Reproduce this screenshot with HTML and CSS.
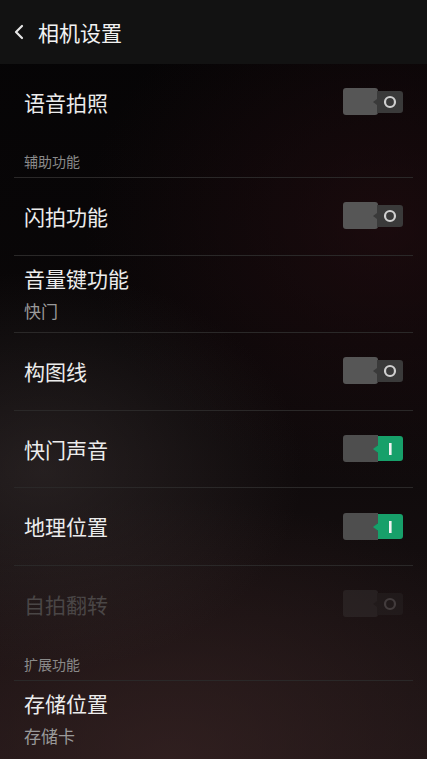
FILE: index.html
```html
<!DOCTYPE html>
<html lang="zh-CN">
<head>
  <meta charset="UTF-8" />
  <title>相机设置</title>
  <link rel="stylesheet" href="styles.css">
</head>
<body>

<header class="topbar">
  <svg class="back" width="12" height="16" viewBox="0 0 12 16">
    <path d="M9 2 L3 8 L9 14" fill="none" stroke="#e6e6e6" stroke-width="2.2" stroke-linecap="round" stroke-linejoin="round"/>
  </svg>
  <h1>相机设置</h1>
</header>

<main class="list">
  <div class="row">
    <span class="label">语音拍照</span>
    <svg class="toggle" width="60" height="28" viewBox="0 0 60 28">
      <rect x="0" y="0" width="35" height="27" rx="3" fill="#565656"/>
      <path d="M34 3 H57 Q60 3 60 6 V22 Q60 25 57 25 H34 V17 L30 14 L34 11 Z" fill="#3a3a3a"/>
      <circle cx="47" cy="14" r="5" fill="none" stroke="#d0d0d0" stroke-width="2.2"/>
    </svg>
  </div>

  <div class="section">辅助功能</div>

  <div class="row line">
    <span class="label">闪拍功能</span>
    <svg class="toggle" width="60" height="28" viewBox="0 0 60 28">
      <rect x="0" y="0" width="35" height="27" rx="3" fill="#565656"/>
      <path d="M34 3 H57 Q60 3 60 6 V22 Q60 25 57 25 H34 V17 L30 14 L34 11 Z" fill="#3a3a3a"/>
      <circle cx="47" cy="14" r="5" fill="none" stroke="#d0d0d0" stroke-width="2.2"/>
    </svg>
  </div>

  <div class="row line">
    <div class="stack">
      <span class="label">音量键功能</span>
      <span class="sub">快门</span>
    </div>
  </div>

  <div class="row line">
    <span class="label">构图线</span>
    <svg class="toggle" width="60" height="28" viewBox="0 0 60 28">
      <rect x="0" y="0" width="35" height="27" rx="3" fill="#565656"/>
      <path d="M34 3 H57 Q60 3 60 6 V22 Q60 25 57 25 H34 V17 L30 14 L34 11 Z" fill="#3a3a3a"/>
      <circle cx="47" cy="14" r="5" fill="none" stroke="#d0d0d0" stroke-width="2.2"/>
    </svg>
  </div>

  <div class="row line">
    <span class="label">快门声音</span>
    <svg class="toggle" width="60" height="28" viewBox="0 0 60 28">
      <path d="M3 0 H35 V10 L31 14 L35 18 V27 H3 Q0 27 0 24 V3 Q0 0 3 0 Z" fill="#4e4e4e"/>
      <path d="M35 1 H57 Q60 1 60 4 V23 Q60 26 57 26 H35 V18 L30 14 L35 10 Z" fill="#17a06a"/>
      <rect x="46" y="8" width="2.6" height="12" fill="#f2f2f2"/>
    </svg>
  </div>

  <div class="row line">
    <span class="label">地理位置</span>
    <svg class="toggle" width="60" height="28" viewBox="0 0 60 28">
      <path d="M3 0 H35 V10 L31 14 L35 18 V27 H3 Q0 27 0 24 V3 Q0 0 3 0 Z" fill="#4e4e4e"/>
      <path d="M35 1 H57 Q60 1 60 4 V23 Q60 26 57 26 H35 V18 L30 14 L35 10 Z" fill="#17a06a"/>
      <rect x="46" y="8" width="2.6" height="12" fill="#f2f2f2"/>
    </svg>
  </div>

  <div class="row disabled">
    <span class="label">自拍翻转</span>
    <svg class="toggle" width="60" height="28" viewBox="0 0 60 28">
      <rect x="0" y="0" width="35" height="27" rx="3" fill="#565656"/>
      <path d="M34 3 H57 Q60 3 60 6 V22 Q60 25 57 25 H34 V17 L30 14 L34 11 Z" fill="#3a3a3a"/>
      <circle cx="47" cy="14" r="5" fill="none" stroke="#d0d0d0" stroke-width="2.2"/>
    </svg>
  </div>

  <div class="section">扩展功能</div>

  <div class="row">
    <div class="stack">
      <span class="label">存储位置</span>
      <span class="sub">存储卡</span>
    </div>
  </div>
</main>

</body>
</html>
```

FILE: styles.css
```css
html, body {
  height: 100%;
}
body {
  margin: 0;
  width: 427px;
  height: 759px;
  overflow: hidden;
  font-family: "Noto Sans CJK SC", "Noto Sans", sans-serif;
  color: #ececec;
  background-color: #070506;
  background-image:
    radial-gradient(ellipse 260px 200px at 10% 62%, rgba(70, 62, 62, 0.4), transparent),
    radial-gradient(ellipse 420px 260px at 40% 100%, rgba(56, 36, 36, 0.7), transparent),
    radial-gradient(ellipse 300px 260px at 90% 30%, rgba(40, 14, 18, 0.55), transparent),
    linear-gradient(#050405 0%, #0a0708 45%, #1c1314 100%);
  display: flex;
  flex-direction: column;
}
.topbar {
  height: 64px;
  flex-shrink: 0;
  background-color: #121212;
  display: flex;
  align-items: center;
  padding: 0 0 0 13px;
  box-sizing: border-box;
}
.back {
  margin-right: 13px;
  margin-top: -1px;
}
.topbar h1 {
  margin: 0;
  font-size: 21px;
  font-weight: normal;
  color: #f2f2f2;
  line-height: 1;
}
.list {
  padding: 0 14px;
  display: flex;
  flex-direction: column;
}
.row {
  height: 76.6px;
  padding: 0 10px;
  display: flex;
  align-items: center;
  justify-content: space-between;
}
.row.line {
  border-bottom: 1px solid #2a2828;
}
.row:first-child {
  height: 76px;
}
.label {
  font-size: 21px;
  line-height: 1;
  color: #ececec;
}
.stack {
  display: flex;
  flex-direction: column;
  gap: 13px;
  margin-top: -1px;
}
.sub {
  font-size: 17px;
  line-height: 1;
  color: #9a9a9a;
}
.section {
  height: 38px;
  padding: 0 10px 9px;
  box-sizing: border-box;
  display: flex;
  align-items: flex-end;
  font-size: 14px;
  color: #8a8a8a;
  border-bottom: 1px solid #2a2828;
  line-height: 1;
}
.disabled .label {
  color: #4a4646;
}
.disabled .toggle {
  opacity: 0.22;
}
```
